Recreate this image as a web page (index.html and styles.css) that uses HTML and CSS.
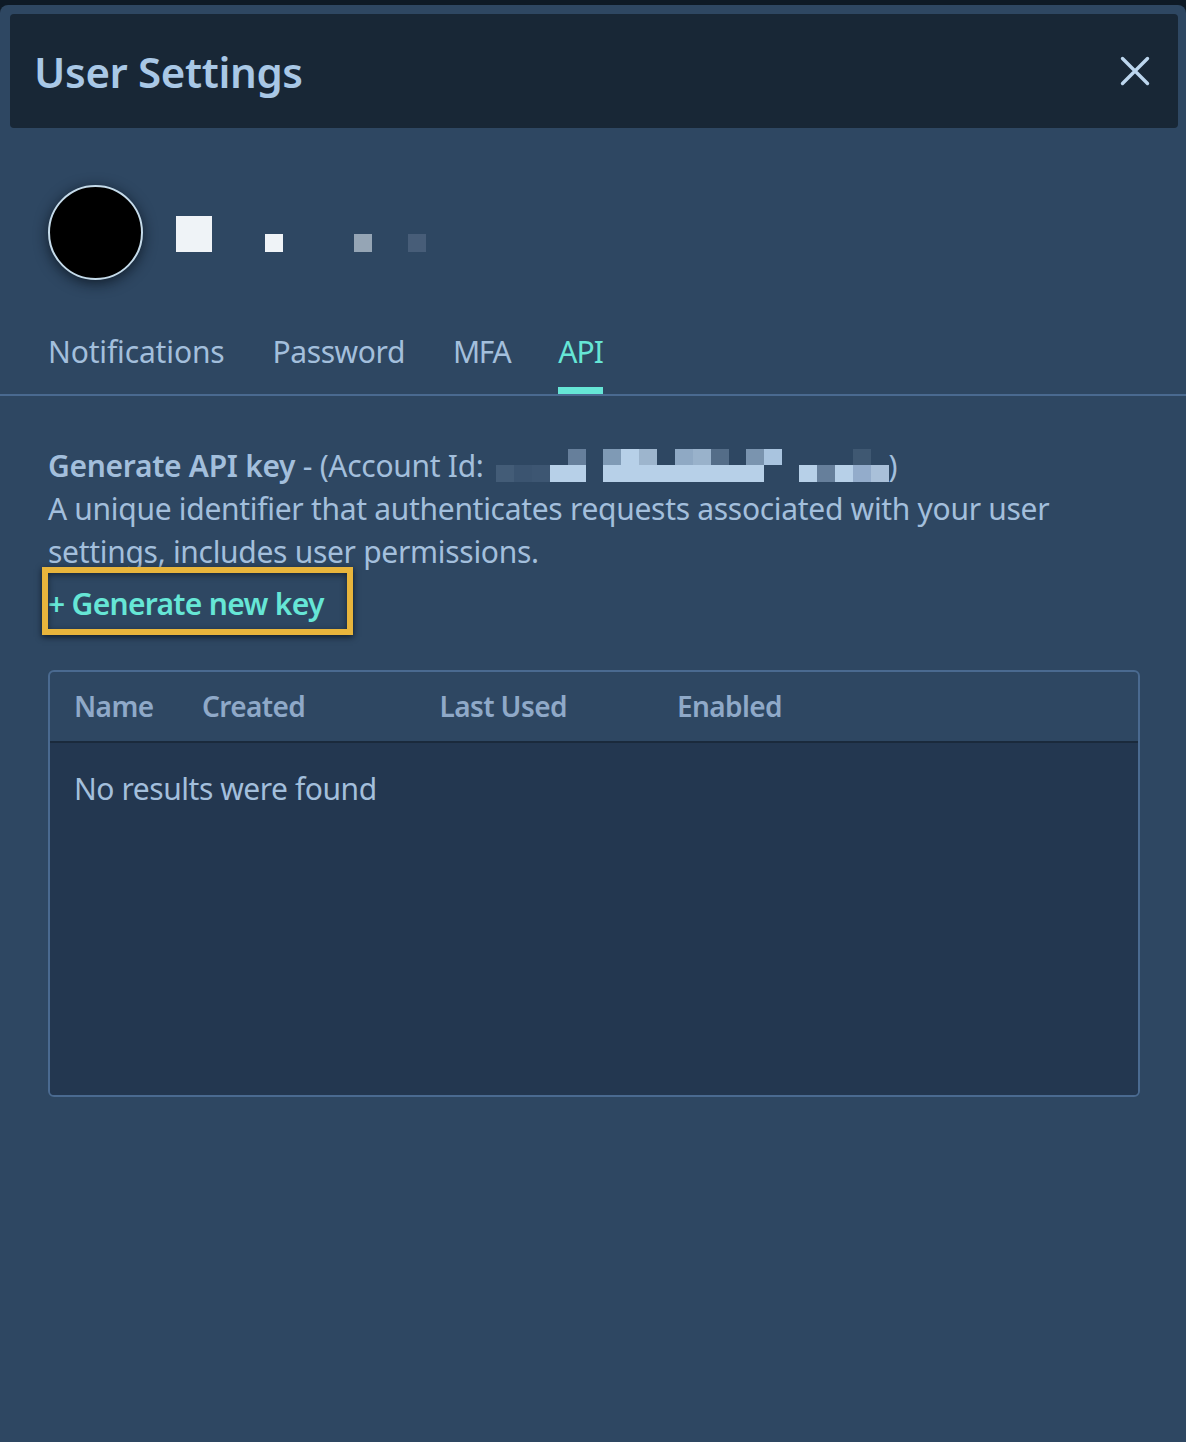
FILE: index.html
```html
<!DOCTYPE html>
<html lang="en">
<head>
<meta charset="utf-8">
<title>User Settings</title>
<link rel="stylesheet" href="styles.css">
</head>
<body>
<main class="modal">
  <header class="modal-header">
    <h1 class="modal-title">User Settings</h1>
    <button class="close" aria-label="Close">
      <svg width="30" height="30" viewBox="0 0 30 30"><path d="M2.5 2.5 L27.5 27.5 M27.5 2.5 L2.5 27.5" stroke="#bcd6ee" stroke-width="3.4" stroke-linecap="round" fill="none"/></svg>
    </button>
  </header>

  <section class="profile">
    <div class="avatar"></div>
    <div class="name-blocks">
      <span class="blk blk-big"></span>
      <span class="blk blk-a"></span>
      <span class="blk blk-b"></span>
      <span class="blk blk-c"></span>
    </div>
  </section>

  <nav class="tabs">
    <a class="tab">Notifications</a>
    <a class="tab tab-password">Password</a>
    <a class="tab tab-tight">MFA</a>
    <a class="tab tab-active">API</a>
  </nav>

  <section class="content">
    <p class="intro"><strong>Generate API key</strong> - (Account Id:<svg class="redact" width="393" height="33" viewBox="0 0 393 33"><g fill="#b7d0e8">
      <rect x="0" y="16" width="18" height="17" fill="#435c77"/><rect x="18" y="16" width="18" height="17" fill="#3b5470"/><rect x="36" y="16" width="18" height="17" fill="#3d5672"/>
      <rect x="54" y="16" width="36" height="17"/><rect x="72" y="0" width="18" height="16" fill="#667f9b"/>
      <rect x="107" y="0" width="18" height="16" fill="#7f9ab5"/><rect x="125" y="0" width="18" height="16"/><rect x="143" y="0" width="18" height="16" fill="#9db5cd"/>
      <rect x="179" y="0" width="18" height="16" fill="#8fa9c4"/><rect x="197" y="0" width="18" height="16" fill="#99b2cb"/><rect x="215" y="0" width="18" height="16" fill="#546d88"/>
      <rect x="250" y="0" width="18" height="16" fill="#7a94af"/><rect x="268" y="0" width="18" height="16" fill="#a9c4df"/>
      <rect x="107" y="16" width="161" height="17"/>
      <rect x="303" y="16" width="18" height="17"/><rect x="321" y="16" width="18" height="17" fill="#667f9b"/><rect x="339" y="16" width="18" height="17"/><rect x="357" y="16" width="18" height="17" fill="#93accb"/><rect x="375" y="16" width="18" height="17" fill="#a9c0d9"/>
      <rect x="357" y="0" width="18" height="16" fill="#3f5872"/>
    </g></svg>)<br>A unique identifier that authenticates requests associated with your user settings, includes user permissions.</p>

    <div class="action">
      <a class="generate">+ Generate new key</a>
      <span class="highlight"></span>
    </div>

    <div class="table">
      <div class="table-head">
        <span>Name</span>
        <span>Created</span>
        <span>Last Used</span>
        <span>Enabled</span>
      </div>
      <div class="table-body">No results were found</div>
    </div>
  </section>
</main>
</body>
</html>
```
FILE: styles.css
```css
* { box-sizing: border-box; }
html, body { height: 100%; }
body {
  margin: 0;
  background: #0e1a26;
  padding-top: 5px;
  font-family: "Noto Sans", sans-serif;
  overflow: hidden;
}
.modal {
  height: 1437px;
  background: #2e4762;
  border-radius: 8px 8px 0 0;
  padding-top: 9px;
  display: flex;
  flex-direction: column;
}
.modal-header {
  margin: 0 8px 0 10px;
  height: 114px;
  background: #182736;
  border-radius: 4px;
  padding: 0 28px 0 24px;
  display: flex;
  align-items: center;
  justify-content: space-between;
}
.modal-title {
  margin: 0;
  font-size: 42px;
  font-weight: 600;
  letter-spacing: -0.35px;
  color: #a9c8e6;
}
.close {
  background: none;
  border: 0;
  padding: 0;
  display: flex;
}
.profile {
  margin-top: 57px;
  padding-left: 48px;
  display: flex;
  align-items: flex-start;
}
.avatar {
  width: 95px;
  height: 95px;
  border-radius: 50%;
  background: #000;
  border: 2px solid #c5dbea;
  box-shadow: 0 3px 14px rgba(8, 16, 26, 0.75);
}
.name-blocks {
  margin: 31px 0 0 33px;
  display: flex;
  align-items: flex-end;
}
.blk { display: block; width: 18px; height: 18px; }
.blk-big { width: 36px; height: 36px; background: #eff3f7; margin-right: 53px; }
.blk-a { background: #eff3f7; margin-right: 71px; }
.blk-b { background: #95a5b5; margin-right: 36px; }
.blk-c { background: #475d78; }
.tabs {
  margin-top: 45px;
  height: 71px;
  padding-left: 48px;
  display: flex;
  gap: 48px;
  border-bottom: 2px solid #4a6a90;
}
.tab {
  height: 69px;
  font-size: 30px;
  line-height: 54px;
  letter-spacing: -0.15px;
  color: #a3bfdc;
}
.tab-password { letter-spacing: -0.4px; }
.tab-tight { letter-spacing: -1.4px; }
.tab-active {
  color: #66e6d6;
  letter-spacing: -0.9px;
  border-bottom: 7px solid #66e6d6;
}
.content { padding: 49px 46px 0 48px; }
.intro {
  margin: 0;
  font-size: 30px;
  line-height: 42.8px;
  letter-spacing: -0.3px;
  color: #a3bfdc;
}
.intro strong { font-weight: 600; }
.redact { vertical-align: -5px; margin: 0 0 0 12px; }
.action {
  position: relative;
  width: fit-content;
  margin-top: 10px;
}
.generate {
  display: block;
  font-size: 30px;
  font-weight: 600;
  line-height: 42px;
  letter-spacing: -0.7px;
  color: #66e6d6;
}
.highlight {
  position: absolute;
  inset: -16px -29px -10px -6px;
  border: 6px solid #e8b53c;
  box-shadow: 0 2px 6px rgba(8, 16, 26, 0.8), inset 0 2px 6px rgba(8, 16, 26, 0.6);
}
.table {
  margin-top: 45px;
  height: 427px;
  border: 2px solid #4a6a90;
  border-radius: 6px;
  overflow: hidden;
  display: flex;
  flex-direction: column;
}
.table-head {
  height: 71px;
  flex: none;
  padding: 0 0 2px 24px;
  display: grid;
  grid-template-columns: 128px 237.5px 237.5px 1fr;
  align-items: center;
  font-size: 28px;
  font-weight: 600;
  letter-spacing: -0.6px;
  color: #8fa9c8;
  border-bottom: 2px solid #1a2a3c;
}
.table-body {
  flex: 1;
  background: #233750;
  padding: 24px 24px;
  font-size: 30px;
  line-height: 44px;
  letter-spacing: -0.45px;
  color: #a3bfdc;
}
```
